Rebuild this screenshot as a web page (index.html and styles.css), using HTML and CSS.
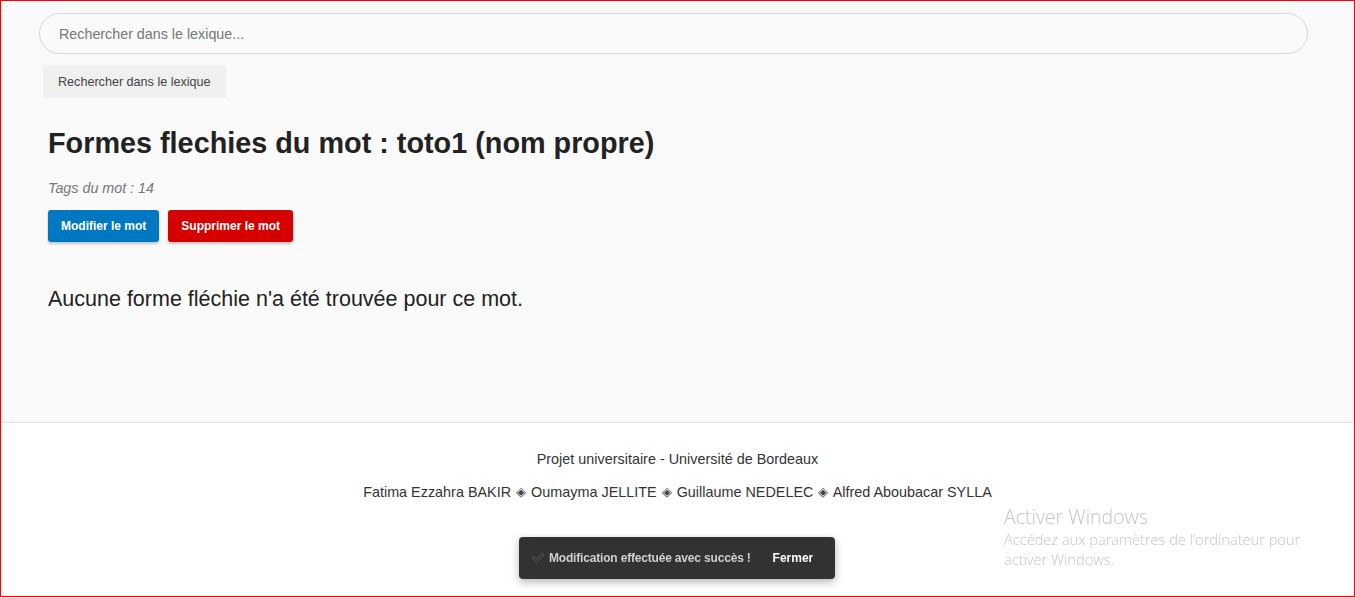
FILE: index.html
```html
<!DOCTYPE html>
<html lang="fr">
<head>
<meta charset="utf-8">
<title>Lexique</title>
<link rel="stylesheet" href="styles.css">
</head>
<body>
<div class="page">
  <main class="main">
    <div class="search">
      <input class="search-input" type="text" placeholder="Rechercher dans le lexique...">
      <button class="search-btn" type="button">Rechercher dans le lexique</button>
    </div>
    <section class="word">
      <h1 class="word-title">Formes flechies du mot : toto1 (nom propre)</h1>
      <p class="word-tags">Tags du mot : 14</p>
      <div class="actions">
        <button class="btn btn-edit" type="button">Modifier le mot</button>
        <button class="btn btn-delete" type="button">Supprimer le mot</button>
      </div>
      <p class="empty">Aucune forme fléchie n'a été trouvée pour ce mot.</p>
    </section>
  </main>
  <footer class="footer">
    <p class="footer-line">Projet universitaire - Université de Bordeaux</p>
    <p class="footer-line">Fatima Ezzahra BAKIR <span class="sep">◈</span> Oumayma JELLITE <span class="sep">◈</span> Guillaume NEDELEC <span class="sep">◈</span> Alfred Aboubacar SYLLA</p>
  </footer>
</div>

<div class="toast">
  <svg class="toast-icon" width="14" height="12" viewBox="0 0 14 12">
    <path d="M1 6.2 L2.6 4.6 L5.2 7.2 L11.4 1 L13 2.6 L5.2 10.4 Z" fill="none" stroke="#5a5a5a" stroke-width="1" stroke-linejoin="round"/>
  </svg>
  <span class="toast-msg">Modification effectuée avec succès !</span>
  <button class="toast-close" type="button">Fermer</button>
</div>

<div class="watermark">
  <div class="wm-title">Activer Windows</div>
  <div class="wm-text">Accédez aux paramètres de l’ordinateur pour<br>activer Windows.</div>
</div>

<div class="frame"></div>
</body>
</html>
```

FILE: styles.css
```css
* { box-sizing: border-box; }

html, body {
  margin: 0;
  padding: 0;
  height: 100%;
}

body {
  font-family: "Liberation Sans", Arial, sans-serif;
  color: #222;
  background: #ffffff;
}

.page {
  display: flex;
  flex-direction: column;
  min-height: 597px;
}

.main {
  background: #fafafa;
  height: 422px;
  flex: none;
}

.search {
  display: flex;
  flex-direction: column;
  align-items: flex-start;
  padding: 13px 47px 0 39px;
}

.search-input {
  width: 100%;
  height: 41px;
  border: 1px solid #d3d7dd;
  border-radius: 21px;
  background: #fafafa;
  padding: 0 0 0 19px;
  font-family: "Liberation Sans", Arial, sans-serif;
  font-size: 14.3px;
  color: #333;
  outline: none;
}

.search-input::placeholder {
  color: #777;
}

.search-btn {
  margin: 11px 0 0 4px;
  height: 33px;
  padding: 0 15px;
  border: none;
  border-radius: 2px;
  background: #f0f0f0;
  color: #444;
  font-family: "Liberation Sans", Arial, sans-serif;
  font-size: 12.6px;
}

.word {
  padding: 0 48px;
}

.word-title {
  margin: 29px 0 0;
  font-size: 28.8px;
  line-height: 32px;
  font-weight: bold;
  color: #222;
}

.word-tags {
  margin: 21px 0 0;
  font-size: 14.3px;
  line-height: 16px;
  font-style: italic;
  color: #777;
}

.actions {
  display: flex;
  gap: 9px;
  margin-top: 14px;
}

.btn {
  height: 32px;
  padding: 0 13px;
  border: none;
  border-radius: 3px;
  color: #fff;
  font-family: "Liberation Sans", Arial, sans-serif;
  font-size: 12px;
  font-weight: bold;
  box-shadow: 0 2px 3px rgba(0, 0, 0, 0.22);
}

.btn-edit { background: #0077c1; }
.btn-delete { background: #d50000; }

.empty {
  margin: 45px 0 0;
  font-size: 21.5px;
  line-height: 25px;
  color: #222;
}

.footer {
  flex: 1;
  border-top: 1px solid #e2e2e2;
  background: #fff;
  padding-top: 26px;
  text-align: center;
}

.footer-line {
  margin: 0 0 13px;
  font-size: 14.4px;
  line-height: 20px;
  color: #333;
}

.sep {
  display: inline-block;
  font-size: 12.5px;
  line-height: 1;
  margin: 0 1px;
  vertical-align: 1px;
  color: #444;
}

.toast {
  position: fixed;
  left: 519px;
  bottom: 18px;
  width: 316px;
  height: 42px;
  display: flex;
  align-items: center;
  padding: 0 0 0 12px;
  background: #323232;
  border-radius: 4px;
  box-shadow: 0 3px 8px rgba(0, 0, 0, 0.3);
}

.toast-icon {
  flex: none;
  margin-right: 4px;
}

.toast-msg {
  font-size: 12px;
  font-weight: bold;
  letter-spacing: -0.18px;
  color: #cfcfcf;
  white-space: nowrap;
}

.toast-close {
  margin-left: 22px;
  padding: 0;
  border: none;
  background: transparent;
  color: #fff;
  font-family: "Liberation Sans", Arial, sans-serif;
  font-size: 12px;
  font-weight: bold;
}

.watermark {
  position: fixed;
  left: 1004px;
  top: 505px;
  font-family: "Open Sans", "Noto Sans", sans-serif;
  color: #c4c4c4;
  pointer-events: none;
}

.wm-title {
  font-size: 19.5px;
  line-height: 24px;
  font-weight: 300;
}

.wm-text {
  font-size: 14.6px;
  line-height: 20px;
  font-weight: 300;
}

.frame {
  position: fixed;
  inset: 0;
  border: 1px solid #ff0000;
  pointer-events: none;
}
```
